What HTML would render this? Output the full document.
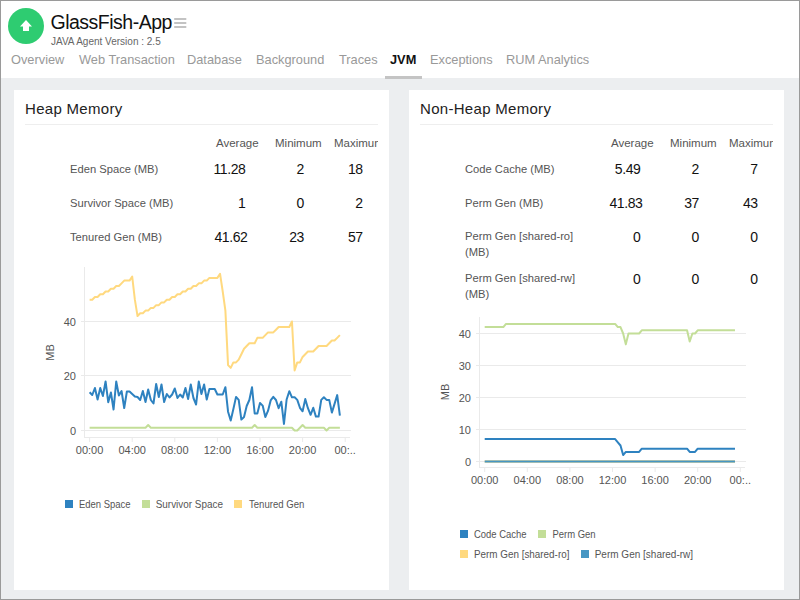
<!DOCTYPE html>
<html><head><meta charset="utf-8"><style>
*{margin:0;padding:0;box-sizing:border-box}
html,body{width:800px;height:600px;overflow:hidden;background:#fff}
body{font-family:"Liberation Sans",sans-serif;position:relative}
.frame{position:absolute;left:0;top:0;width:800px;height:600px;border:1px solid #9a9a9a;z-index:10;pointer-events:none}
.hdr{position:absolute;left:0;top:0;width:800px;height:78px;background:#fff}
.bg{position:absolute;left:0;top:78px;width:800px;height:522px;background:#eceef0}
.logo{position:absolute;left:8px;top:8px;width:36px;height:36px;border-radius:50%;background:#2ecc71}
.t{position:absolute;white-space:nowrap}
.app{left:50.5px;top:11px;font-size:19.5px;letter-spacing:-0.5px;color:#111}
.ver{left:51px;top:35.5px;font-size:10px;color:#666}
.tab{top:52px;font-size:12.8px;color:#999}
.tab.on{color:#111;font-weight:bold}
.uline{position:absolute;left:385px;top:76px;width:37px;height:3px;background:#c4c4c4}
.panel{position:absolute;top:90px;width:375px;height:500px;background:#fff}
.ptitle{top:99.5px;font-size:15px;letter-spacing:0.3px;color:#222}
.sep{position:absolute;top:124px;height:1px;background:#eeeeee}
.th{font-size:11.5px;color:#555}
.lbl{font-size:11.2px;color:#555;line-height:15.5px}
.num{font-size:14px;letter-spacing:-0.4px;color:#111;text-align:right}
svg{position:absolute;left:0;top:0}
.ax{font-family:"Liberation Sans",sans-serif;font-size:11px;fill:#555}
.lg{font-family:"Liberation Sans",sans-serif;font-size:10.2px;fill:#555}
</style></head><body>
<div class="hdr"></div>
<div class="bg"></div>
<div class="logo"><svg width="36" height="36" viewBox="0 0 36 36" style="position:absolute;left:0;top:0"><path d="M18 12 L24 18.5 L21 18.5 L21 23 L15 23 L15 18.5 L12 18.5 Z" fill="#fff"/></svg></div>
<div class="t app">GlassFish-App</div>
<svg width="800" height="80" style="position:absolute;left:0;top:0"><g stroke="#bdbdbd" stroke-width="1.8"><line x1="174.2" y1="19" x2="186.3" y2="19"/><line x1="174.2" y1="23" x2="186.3" y2="23"/><line x1="174.2" y1="27" x2="186.3" y2="27"/></g></svg>
<div class="t ver">JAVA Agent Version : 2.5</div>
<div class="t tab" style="left:11px">Overview</div><div class="t tab" style="left:79px">Web Transaction</div><div class="t tab" style="left:187px">Database</div><div class="t tab" style="left:256px">Background</div><div class="t tab" style="left:339px">Traces</div><div class="t tab on" style="left:390px">JVM</div><div class="t tab" style="left:430px">Exceptions</div><div class="t tab" style="left:506px">RUM Analytics</div>
<div class="uline"></div>
<div class="panel" style="left:14px"></div>
<div class="panel" style="left:409px"></div>
<div class="t ptitle" style="left:25px">Heap Memory</div>
<div class="t ptitle" style="left:420px">Non-Heap Memory</div>
<div class="sep" style="left:25px;width:353px"></div>
<div class="sep" style="left:420px;width:353px"></div>
<div class="t th" style="left:216px;top:137px">Average</div>
<div class="t th" style="left:275px;top:137px">Minimum</div>
<div class="t th" style="left:334px;top:137px;width:44px;overflow:hidden">Maximum</div>
<div class="t lbl" style="left:70px;top:162px">Eden Space (MB)</div>
<div class="t num" style="left:195.5px;width:50px;top:161px">11.28</div>
<div class="t num" style="left:254px;width:50px;top:161px">2</div>
<div class="t num" style="left:312.7px;width:50px;top:161px">18</div>
<div class="t lbl" style="left:70px;top:196px">Survivor Space (MB)</div>
<div class="t num" style="left:195.5px;width:50px;top:195px">1</div>
<div class="t num" style="left:254px;width:50px;top:195px">0</div>
<div class="t num" style="left:312.7px;width:50px;top:195px">2</div>
<div class="t lbl" style="left:70px;top:229.5px">Tenured Gen (MB)</div>
<div class="t num" style="left:197.5px;width:50px;top:229px">41.62</div>
<div class="t num" style="left:254px;width:50px;top:229px">23</div>
<div class="t num" style="left:312.7px;width:50px;top:229px">57</div>
<div class="t th" style="left:611px;top:137px">Average</div>
<div class="t th" style="left:670px;top:137px">Minimum</div>
<div class="t th" style="left:729px;top:137px;width:44px;overflow:hidden">Maximum</div>
<div class="t lbl" style="left:465px;top:162px">Code Cache (MB)</div>
<div class="t num" style="left:590.5px;width:50px;top:161px">5.49</div>
<div class="t num" style="left:649px;width:50px;top:161px">2</div>
<div class="t num" style="left:707.7px;width:50px;top:161px">7</div>
<div class="t lbl" style="left:465px;top:196px">Perm Gen (MB)</div>
<div class="t num" style="left:592.5px;width:50px;top:195px">41.83</div>
<div class="t num" style="left:649px;width:50px;top:195px">37</div>
<div class="t num" style="left:707.7px;width:50px;top:195px">43</div>
<div class="t lbl" style="left:465px;top:229px">Perm Gen [shared-ro]<br>(MB)</div>
<div class="t num" style="left:590.5px;width:50px;top:229px">0</div>
<div class="t num" style="left:649px;width:50px;top:229px">0</div>
<div class="t num" style="left:707.7px;width:50px;top:229px">0</div>
<div class="t lbl" style="left:465px;top:271px">Perm Gen [shared-rw]<br>(MB)</div>
<div class="t num" style="left:590.5px;width:50px;top:271px">0</div>
<div class="t num" style="left:649px;width:50px;top:271px">0</div>
<div class="t num" style="left:707.7px;width:50px;top:271px">0</div>
<svg width="800" height="600">
<line x1="84.5" y1="430.5" x2="351" y2="430.5" stroke="#eaeaea" stroke-width="1"/>
<line x1="81" y1="430.5" x2="84.5" y2="430.5" stroke="#eaeaea" stroke-width="1"/>
<text x="76" y="434.5" text-anchor="end" class="ax">0</text>
<line x1="84.5" y1="375.5" x2="351" y2="375.5" stroke="#eaeaea" stroke-width="1"/>
<line x1="81" y1="375.5" x2="84.5" y2="375.5" stroke="#eaeaea" stroke-width="1"/>
<text x="76" y="379.5" text-anchor="end" class="ax">20</text>
<line x1="84.5" y1="321.5" x2="351" y2="321.5" stroke="#eaeaea" stroke-width="1"/>
<line x1="81" y1="321.5" x2="84.5" y2="321.5" stroke="#eaeaea" stroke-width="1"/>
<text x="76" y="325.5" text-anchor="end" class="ax">40</text>
<line x1="84.5" y1="267" x2="84.5" y2="438" stroke="#eaeaea" stroke-width="1"/>
<line x1="84" y1="437.5" x2="350" y2="437.5" stroke="#eaeaea" stroke-width="1"/>
<line x1="89.6" y1="437.5" x2="89.6" y2="442" stroke="#eaeaea" stroke-width="1"/>
<text x="89.6" y="454" text-anchor="middle" class="ax">00:00</text>
<line x1="132.2" y1="437.5" x2="132.2" y2="442" stroke="#eaeaea" stroke-width="1"/>
<text x="132.2" y="454" text-anchor="middle" class="ax">04:00</text>
<line x1="174.8" y1="437.5" x2="174.8" y2="442" stroke="#eaeaea" stroke-width="1"/>
<text x="174.8" y="454" text-anchor="middle" class="ax">08:00</text>
<line x1="217.4" y1="437.5" x2="217.4" y2="442" stroke="#eaeaea" stroke-width="1"/>
<text x="217.4" y="454" text-anchor="middle" class="ax">12:00</text>
<line x1="260.0" y1="437.5" x2="260.0" y2="442" stroke="#eaeaea" stroke-width="1"/>
<text x="260.0" y="454" text-anchor="middle" class="ax">16:00</text>
<line x1="302.6" y1="437.5" x2="302.6" y2="442" stroke="#eaeaea" stroke-width="1"/>
<text x="302.6" y="454" text-anchor="middle" class="ax">20:00</text>
<line x1="345.2" y1="437.5" x2="345.2" y2="442" stroke="#eaeaea" stroke-width="1"/>
<text x="345.2" y="454" text-anchor="middle" class="ax">00:..</text>
<text x="0" y="0" transform="translate(54.2,352.5) rotate(-90)" text-anchor="middle" class="ax">MB</text>
<polyline points="89.60,392.20 92.26,395.00 94.92,388.00 97.59,399.50 100.25,388.00 102.91,396.00 105.57,381.50 108.24,402.20 110.90,392.50 113.56,409.50 116.22,381.50 118.89,395.50 121.55,391.00 124.21,408.00 126.88,391.50 129.54,391.50 132.20,394.00 134.86,396.50 137.53,397.00 140.19,400.00 142.85,391.00 145.51,402.00 148.18,389.50 150.84,400.00 153.50,403.50 156.16,384.00 158.82,397.00 161.49,384.50 164.15,402.00 166.81,394.00 169.47,397.50 172.14,394.50 174.80,388.50 177.46,398.00 180.12,394.50 182.79,397.50 185.45,388.00 188.11,399.00 190.77,384.50 193.44,398.00 196.10,404.50 198.76,381.50 201.43,394.00 204.09,384.50 206.75,399.50 209.41,389.00 212.07,389.00 214.74,389.00 217.40,394.50 220.06,394.50 222.72,394.50 225.39,387.20 228.05,411.70 230.71,420.50 233.38,409.10 236.04,396.90 238.70,399.90 241.36,419.60 244.03,417.00 246.69,406.00 249.35,400.00 252.01,387.20 254.68,413.50 257.34,413.50 260.00,403.00 262.66,405.60 265.32,417.00 267.99,410.90 270.65,400.40 273.31,396.90 275.98,400.00 278.64,408.20 281.30,401.70 283.96,424.00 286.62,399.50 289.29,391.20 291.95,397.30 294.61,397.30 297.27,399.90 299.94,407.80 302.60,411.30 305.26,399.10 307.93,408.20 310.59,414.80 313.25,407.80 315.91,416.60 318.57,416.60 321.24,399.90 323.90,397.30 326.56,399.90 329.23,399.90 331.89,412.60 334.55,403.90 337.21,395.10 339.88,415.70" fill="none" stroke="#2e82c0" stroke-width="2" stroke-linejoin="round"/>
<polyline points="89.60,427.77 92.26,427.77 94.92,427.77 97.59,427.77 100.25,427.77 102.91,427.77 105.57,427.77 108.24,427.77 110.90,427.77 113.56,427.77 116.22,427.77 118.89,427.77 121.55,427.77 124.21,427.77 126.88,427.77 129.54,427.77 132.20,427.77 134.86,427.77 137.53,427.77 140.19,427.77 142.85,427.77 145.51,427.77 148.18,425.05 150.84,427.77 153.50,427.77 156.16,427.77 158.82,427.77 161.49,427.77 164.15,427.77 166.81,427.77 169.47,427.77 172.14,427.77 174.80,427.77 177.46,427.77 180.12,427.77 182.79,427.77 185.45,427.77 188.11,427.77 190.77,427.77 193.44,427.77 196.10,427.77 198.76,427.77 201.43,427.77 204.09,427.77 206.75,427.77 209.41,427.77 212.07,427.77 214.74,427.77 217.40,427.77 220.06,427.77 222.72,427.77 225.39,427.77 228.05,427.77 230.71,427.77 233.38,427.77 236.04,427.77 238.70,427.77 241.36,427.77 244.03,427.77 246.69,427.77 249.35,427.77 252.01,427.77 254.68,425.05 257.34,427.77 260.00,427.77 262.66,427.77 265.32,427.77 267.99,427.77 270.65,427.77 273.31,427.77 275.98,427.77 278.64,427.77 281.30,427.77 283.96,427.77 286.62,427.77 289.29,427.77 291.95,427.77 294.61,430.50 297.27,430.50 299.94,427.77 302.60,425.05 305.26,427.77 307.93,427.77 310.59,427.77 313.25,427.77 315.91,427.77 318.57,427.77 321.24,427.77 323.90,427.77 326.56,430.50 329.23,427.77 331.89,427.77 334.55,427.77 337.21,427.77 339.88,427.77" fill="none" stroke="#c3de98" stroke-width="2" stroke-linejoin="round"/>
<polyline points="89.60,299.70 92.26,299.70 94.92,296.98 97.59,296.98 100.25,294.25 102.91,294.25 105.57,291.52 108.24,291.52 110.90,288.80 113.56,288.80 116.22,286.07 118.89,286.07 121.55,283.35 124.21,280.62 126.88,280.62 129.54,280.62 132.20,276.54 134.86,299.70 137.53,316.05 140.19,313.32 142.85,313.32 145.51,310.60 148.18,310.60 150.84,307.88 153.50,307.88 156.16,305.15 158.82,305.15 161.49,302.42 164.15,302.42 166.81,299.70 169.47,299.70 172.14,296.98 174.80,296.98 177.46,294.25 180.12,294.25 182.79,291.52 185.45,291.52 188.11,288.80 190.77,288.80 193.44,286.07 196.10,286.07 198.76,283.35 201.43,283.35 204.09,280.62 206.75,280.62 209.41,277.90 212.07,277.90 214.74,277.90 217.40,277.90 220.06,273.81 222.72,291.52 225.39,310.60 228.05,365.10 230.71,367.82 233.38,362.38 236.04,362.38 238.70,359.65 241.36,354.20 244.03,348.75 246.69,346.02 249.35,343.30 252.01,343.30 254.68,343.30 257.34,337.85 260.00,337.85 262.66,337.85 265.32,335.12 267.99,332.40 270.65,332.40 273.31,332.40 275.98,329.68 278.64,326.95 281.30,326.95 283.96,326.95 286.62,326.95 289.29,326.95 291.95,321.50 294.61,370.55 297.27,362.38 299.94,362.38 302.60,356.93 305.26,354.20 307.93,351.48 310.59,351.48 313.25,351.48 315.91,348.75 318.57,346.02 321.24,346.02 323.90,346.02 326.56,346.02 329.23,343.30 331.89,340.57 334.55,340.57 337.21,337.85 339.88,335.12" fill="none" stroke="#ffd97f" stroke-width="2" stroke-linejoin="round"/>
<rect x="65" y="500" width="8" height="8" fill="#2e82c0"/><text x="79" y="507.5" class="lg" textLength="51.6" lengthAdjust="spacingAndGlyphs">Eden Space</text>
<rect x="142" y="500" width="8" height="8" fill="#c3de98"/><text x="155.7" y="507.5" class="lg" textLength="67.3" lengthAdjust="spacingAndGlyphs">Survivor Space</text>
<rect x="234" y="500" width="8" height="8" fill="#ffd97f"/><text x="249" y="507.5" class="lg" textLength="55.3" lengthAdjust="spacingAndGlyphs">Tenured Gen</text>
<line x1="479.5" y1="461.5" x2="746" y2="461.5" stroke="#eaeaea" stroke-width="1"/>
<line x1="476" y1="461.5" x2="479.5" y2="461.5" stroke="#eaeaea" stroke-width="1"/>
<text x="471" y="465.5" text-anchor="end" class="ax">0</text>
<line x1="479.5" y1="429.5" x2="746" y2="429.5" stroke="#eaeaea" stroke-width="1"/>
<line x1="476" y1="429.5" x2="479.5" y2="429.5" stroke="#eaeaea" stroke-width="1"/>
<text x="471" y="433.5" text-anchor="end" class="ax">10</text>
<line x1="479.5" y1="397.5" x2="746" y2="397.5" stroke="#eaeaea" stroke-width="1"/>
<line x1="476" y1="397.5" x2="479.5" y2="397.5" stroke="#eaeaea" stroke-width="1"/>
<text x="471" y="401.5" text-anchor="end" class="ax">20</text>
<line x1="479.5" y1="365.5" x2="746" y2="365.5" stroke="#eaeaea" stroke-width="1"/>
<line x1="476" y1="365.5" x2="479.5" y2="365.5" stroke="#eaeaea" stroke-width="1"/>
<text x="471" y="369.5" text-anchor="end" class="ax">30</text>
<line x1="479.5" y1="333.5" x2="746" y2="333.5" stroke="#eaeaea" stroke-width="1"/>
<line x1="476" y1="333.5" x2="479.5" y2="333.5" stroke="#eaeaea" stroke-width="1"/>
<text x="471" y="337.5" text-anchor="end" class="ax">40</text>
<line x1="479.5" y1="317" x2="479.5" y2="468" stroke="#eaeaea" stroke-width="1"/>
<line x1="479" y1="467.5" x2="745" y2="467.5" stroke="#eaeaea" stroke-width="1"/>
<line x1="484.7" y1="467.5" x2="484.7" y2="472" stroke="#eaeaea" stroke-width="1"/>
<text x="484.7" y="484" text-anchor="middle" class="ax">00:00</text>
<line x1="527.3" y1="467.5" x2="527.3" y2="472" stroke="#eaeaea" stroke-width="1"/>
<text x="527.3" y="484" text-anchor="middle" class="ax">04:00</text>
<line x1="569.9" y1="467.5" x2="569.9" y2="472" stroke="#eaeaea" stroke-width="1"/>
<text x="569.9" y="484" text-anchor="middle" class="ax">08:00</text>
<line x1="612.5" y1="467.5" x2="612.5" y2="472" stroke="#eaeaea" stroke-width="1"/>
<text x="612.5" y="484" text-anchor="middle" class="ax">12:00</text>
<line x1="655.1" y1="467.5" x2="655.1" y2="472" stroke="#eaeaea" stroke-width="1"/>
<text x="655.1" y="484" text-anchor="middle" class="ax">16:00</text>
<line x1="697.7" y1="467.5" x2="697.7" y2="472" stroke="#eaeaea" stroke-width="1"/>
<text x="697.7" y="484" text-anchor="middle" class="ax">20:00</text>
<line x1="740.3" y1="467.5" x2="740.3" y2="472" stroke="#eaeaea" stroke-width="1"/>
<text x="740.3" y="484" text-anchor="middle" class="ax">00:..</text>
<text x="0" y="0" transform="translate(449.2,392) rotate(-90)" text-anchor="middle" class="ax">MB</text>
<polyline points="484.70,439.10 487.36,439.10 490.02,439.10 492.69,439.10 495.35,439.10 498.01,439.10 500.68,439.10 503.34,439.10 506.00,439.10 508.66,439.10 511.32,439.10 513.99,439.10 516.65,439.10 519.31,439.10 521.98,439.10 524.64,439.10 527.30,439.10 529.96,439.10 532.62,439.10 535.29,439.10 537.95,439.10 540.61,439.10 543.27,439.10 545.94,439.10 548.60,439.10 551.26,439.10 553.92,439.10 556.59,439.10 559.25,439.10 561.91,439.10 564.58,439.10 567.24,439.10 569.90,439.10 572.56,439.10 575.23,439.10 577.89,439.10 580.55,439.10 583.21,439.10 585.88,439.10 588.54,439.10 591.20,439.10 593.86,439.10 596.52,439.10 599.19,439.10 601.85,439.10 604.51,439.10 607.17,439.10 609.84,439.10 612.50,439.10 615.16,439.10 617.83,442.30 620.49,445.50 623.15,455.10 625.81,451.90 628.48,451.90 631.14,451.90 633.80,451.90 636.46,451.90 639.12,451.90 641.79,448.70 644.45,448.70 647.11,448.70 649.77,448.70 652.44,448.70 655.10,448.70 657.76,448.70 660.42,448.70 663.09,448.70 665.75,448.70 668.41,448.70 671.08,448.70 673.74,448.70 676.40,448.70 679.06,448.70 681.73,448.70 684.39,448.70 687.05,448.70 689.71,451.90 692.38,451.90 695.04,451.90 697.70,448.70 700.36,448.70 703.02,448.70 705.69,448.70 708.35,448.70 711.01,448.70 713.67,448.70 716.34,448.70 719.00,448.70 721.66,448.70 724.33,448.70 726.99,448.70 729.65,448.70 732.31,448.70 734.98,448.70" fill="none" stroke="#2e82c0" stroke-width="2" stroke-linejoin="round"/>
<polyline points="484.70,327.10 487.36,327.10 490.02,327.10 492.69,327.10 495.35,327.10 498.01,327.10 500.68,327.10 503.34,327.10 506.00,323.90 508.66,323.90 511.32,323.90 513.99,323.90 516.65,323.90 519.31,323.90 521.98,323.90 524.64,323.90 527.30,323.90 529.96,323.90 532.62,323.90 535.29,323.90 537.95,323.90 540.61,323.90 543.27,323.90 545.94,323.90 548.60,323.90 551.26,323.90 553.92,323.90 556.59,323.90 559.25,323.90 561.91,323.90 564.58,323.90 567.24,323.90 569.90,323.90 572.56,323.90 575.23,323.90 577.89,323.90 580.55,323.90 583.21,323.90 585.88,323.90 588.54,323.90 591.20,323.90 593.86,323.90 596.52,323.90 599.19,323.90 601.85,323.90 604.51,323.90 607.17,323.90 609.84,323.90 612.50,323.90 615.16,323.90 617.83,327.10 620.49,327.10 623.15,333.50 625.81,344.38 628.48,333.50 631.14,333.50 633.80,333.50 636.46,333.50 639.12,333.50 641.79,330.30 644.45,330.30 647.11,330.30 649.77,330.30 652.44,330.30 655.10,330.30 657.76,330.30 660.42,330.30 663.09,330.30 665.75,330.30 668.41,330.30 671.08,330.30 673.74,330.30 676.40,330.30 679.06,330.30 681.73,330.30 684.39,330.30 687.05,330.30 689.71,341.50 692.38,333.50 695.04,333.50 697.70,330.30 700.36,330.30 703.02,330.30 705.69,330.30 708.35,330.30 711.01,330.30 713.67,330.30 716.34,330.30 719.00,330.30 721.66,330.30 724.33,330.30 726.99,330.30 729.65,330.30 732.31,330.30 734.98,330.30" fill="none" stroke="#c3de98" stroke-width="2" stroke-linejoin="round"/>
<polyline points="484.70,461.50 487.36,461.50 490.02,461.50 492.69,461.50 495.35,461.50 498.01,461.50 500.68,461.50 503.34,461.50 506.00,461.50 508.66,461.50 511.32,461.50 513.99,461.50 516.65,461.50 519.31,461.50 521.98,461.50 524.64,461.50 527.30,461.50 529.96,461.50 532.62,461.50 535.29,461.50 537.95,461.50 540.61,461.50 543.27,461.50 545.94,461.50 548.60,461.50 551.26,461.50 553.92,461.50 556.59,461.50 559.25,461.50 561.91,461.50 564.58,461.50 567.24,461.50 569.90,461.50 572.56,461.50 575.23,461.50 577.89,461.50 580.55,461.50 583.21,461.50 585.88,461.50 588.54,461.50 591.20,461.50 593.86,461.50 596.52,461.50 599.19,461.50 601.85,461.50 604.51,461.50 607.17,461.50 609.84,461.50 612.50,461.50 615.16,461.50 617.83,461.50 620.49,461.50 623.15,461.50 625.81,461.50 628.48,461.50 631.14,461.50 633.80,461.50 636.46,461.50 639.12,461.50 641.79,461.50 644.45,461.50 647.11,461.50 649.77,461.50 652.44,461.50 655.10,461.50 657.76,461.50 660.42,461.50 663.09,461.50 665.75,461.50 668.41,461.50 671.08,461.50 673.74,461.50 676.40,461.50 679.06,461.50 681.73,461.50 684.39,461.50 687.05,461.50 689.71,461.50 692.38,461.50 695.04,461.50 697.70,461.50 700.36,461.50 703.02,461.50 705.69,461.50 708.35,461.50 711.01,461.50 713.67,461.50 716.34,461.50 719.00,461.50 721.66,461.50 724.33,461.50 726.99,461.50 729.65,461.50 732.31,461.50 734.98,461.50" fill="none" stroke="#ffd97f" stroke-width="2.4" stroke-linejoin="round"/>
<polyline points="484.70,461.50 487.36,461.50 490.02,461.50 492.69,461.50 495.35,461.50 498.01,461.50 500.68,461.50 503.34,461.50 506.00,461.50 508.66,461.50 511.32,461.50 513.99,461.50 516.65,461.50 519.31,461.50 521.98,461.50 524.64,461.50 527.30,461.50 529.96,461.50 532.62,461.50 535.29,461.50 537.95,461.50 540.61,461.50 543.27,461.50 545.94,461.50 548.60,461.50 551.26,461.50 553.92,461.50 556.59,461.50 559.25,461.50 561.91,461.50 564.58,461.50 567.24,461.50 569.90,461.50 572.56,461.50 575.23,461.50 577.89,461.50 580.55,461.50 583.21,461.50 585.88,461.50 588.54,461.50 591.20,461.50 593.86,461.50 596.52,461.50 599.19,461.50 601.85,461.50 604.51,461.50 607.17,461.50 609.84,461.50 612.50,461.50 615.16,461.50 617.83,461.50 620.49,461.50 623.15,461.50 625.81,461.50 628.48,461.50 631.14,461.50 633.80,461.50 636.46,461.50 639.12,461.50 641.79,461.50 644.45,461.50 647.11,461.50 649.77,461.50 652.44,461.50 655.10,461.50 657.76,461.50 660.42,461.50 663.09,461.50 665.75,461.50 668.41,461.50 671.08,461.50 673.74,461.50 676.40,461.50 679.06,461.50 681.73,461.50 684.39,461.50 687.05,461.50 689.71,461.50 692.38,461.50 695.04,461.50 697.70,461.50 700.36,461.50 703.02,461.50 705.69,461.50 708.35,461.50 711.01,461.50 713.67,461.50 716.34,461.50 719.00,461.50 721.66,461.50 724.33,461.50 726.99,461.50 729.65,461.50 732.31,461.50 734.98,461.50" fill="none" stroke="#4696c3" stroke-width="2" stroke-linejoin="round"/>
<rect x="460" y="530" width="8" height="8" fill="#2e82c0"/><text x="474" y="538" class="lg" textLength="52.6" lengthAdjust="spacingAndGlyphs">Code Cache</text>
<rect x="538" y="530" width="8" height="8" fill="#c3de98"/><text x="552.4" y="538" class="lg" textLength="43.2" lengthAdjust="spacingAndGlyphs">Perm Gen</text>
<rect x="460" y="550" width="8" height="8" fill="#ffd97f"/><text x="474" y="558" class="lg" textLength="95.4" lengthAdjust="spacingAndGlyphs">Perm Gen [shared-ro]</text>
<rect x="581" y="550" width="8" height="8" fill="#4696c3"/><text x="594.7" y="558" class="lg" textLength="98.4" lengthAdjust="spacingAndGlyphs">Perm Gen [shared-rw]</text>
</svg>
<div class="frame"></div>
</body></html>
